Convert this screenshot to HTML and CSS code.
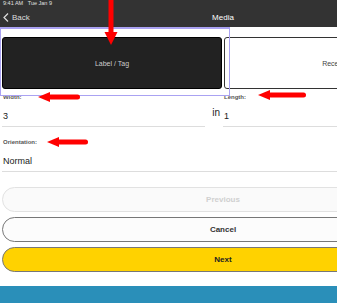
FILE: index.html
```html
<!DOCTYPE html>
<html lang="en">
<head>
  <meta charset="UTF-8" />
  <title>Media</title>
  <meta name="viewport" content="width=device-width, initial-scale=1.0" />
  <link rel="stylesheet" href="styles.css">
</head>
<body>
  <div class="screen">
    <header class="topbar">
      <div class="status">9:41 AM&nbsp;&nbsp;&nbsp;Tue Jan 9</div>
      <div class="nav">
        <span class="back">
          <svg width="6" height="9" viewBox="0 0 6 9"><path d="M5 0.5 L1 4.5 L5 8.5" fill="none" stroke="#ddd" stroke-width="1.2"/></svg>
          Back
        </span>
        <span class="title">Media</span>
      </div>
    </header>

    <section class="tabs">
      <div class="tab tab-active">Label / Tag</div>
      <div class="tab">Receipt</div>
    </section>

    <section class="fields">
      <div class="row">
        <div class="field field-width">
          <label>Width:</label>
          <div class="value">3</div>
        </div>
        <div class="unit">in</div>
        <div class="field field-length">
          <label>Length:</label>
          <div class="value">1</div>
        </div>
      </div>
      <div class="field field-full">
        <label>Orientation:</label>
        <div class="value">Normal</div>
      </div>
    </section>

    <section class="actions">
      <button class="btn btn-disabled">Previous</button>
      <button class="btn">Cancel</button>
      <button class="btn btn-primary">Next</button>
    </section>

    <footer class="bottom-bar"></footer>

    <!-- annotation overlays -->
    <div class="selection"></div>
    <svg class="arrow-down" width="16" height="46" viewBox="0 0 16 46">
      <rect x="5.5" y="0" width="5" height="35" fill="#f00"/>
      <polygon points="1.5,32 14.5,32 8,45" fill="#f00"/>
    </svg>
    <svg class="arrow arrow-width" width="42" height="10" viewBox="0 0 42 10">
      <polygon points="0,5 12,0 12,10" fill="#f00"/>
      <rect x="10" y="2.5" width="32" height="5" rx="2.5" fill="#f00"/>
    </svg>
    <svg class="arrow arrow-length" width="48" height="10" viewBox="0 0 48 10">
      <polygon points="0,5 12,0 12,10" fill="#f00"/>
      <rect x="10" y="2.5" width="38" height="5" rx="2.5" fill="#f00"/>
    </svg>
    <svg class="arrow arrow-orient" width="41" height="10" viewBox="0 0 41 10">
      <polygon points="0,5 12,0 12,10" fill="#f00"/>
      <rect x="10" y="2.5" width="31" height="5" rx="2.5" fill="#f00"/>
    </svg>
  </div>
</body>
</html>
```

FILE: styles.css
```css
:root {
  --bar: #333333;
  --text: #222222;
  --muted: #555555;
  --line: #dddddd;
  --yellow: #ffd200;
  --blue: #2a8fb9;
  --select: #aaa2f2;
}

html, body {
  margin: 0;
  overflow: hidden;
  background: #ffffff;
}

body {
  font-family: 'Liberation Sans', Arial, sans-serif;
  color: var(--text);
  width: 337px;
  height: 303px;
}

.screen {
  position: relative;
  width: 446px;
}

.topbar {
  background-color: var(--bar);
  height: 27px;
  color: #ffffff;
}

.status {
  font-size: 5.5px;
  line-height: 7px;
  padding: 0 3px;
  color: #e0e0e0;
}

.nav {
  position: relative;
  height: 20px;
  display: flex;
  align-items: center;
  font-size: 8px;
}

.back {
  display: flex;
  align-items: center;
  gap: 3px;
  padding-left: 3px;
  color: #dddddd;
}

.title {
  position: absolute;
  left: 0;
  right: 0;
  text-align: center;
  color: #ffffff;
}

.tabs {
  display: flex;
  gap: 2px;
  padding: 10px 2px 0;
}

.tab {
  flex: 1;
  height: 50px;
  border: 1px solid #333333;
  border-radius: 3px;
  display: flex;
  align-items: center;
  justify-content: center;
  font-size: 7px;
  color: #444444;
}

.tab-active {
  background-color: #222222;
  border-color: #000000;
  color: #cccccc;
}

.fields {
  padding: 4px 2px 0;
}

.row {
  display: flex;
}

.field label {
  display: block;
  font-size: 6px;
  font-weight: bold;
  line-height: 8px;
  color: var(--muted);
  padding-left: 1px;
}

.value {
  margin-top: 9px;
  font-size: 9px;
  line-height: 12px;
  padding: 0 1px 4px;
  border-bottom: 1px solid var(--line);
}

.field-width {
  width: 203px;
}

.unit {
  width: 18px;
  margin-top: 14px;
  font-size: 10px;
  line-height: 12px;
  text-align: right;
  padding-right: 3px;
  box-sizing: border-box;
}

.field-length {
  flex: 1;
}

.field-full {
  margin-top: 11px;
}

.actions {
  display: flex;
  flex-direction: column;
  gap: 5px;
  padding: 15px 2px 0;
}

.btn {
  height: 25px;
  border-radius: 13px;
  border: 1px solid #777777;
  background-color: #fcfcfc;
  font-family: inherit;
  font-size: 8px;
  font-weight: bold;
  color: #333333;
  padding: 0;
}

.btn-disabled {
  border-color: #e2e2e2;
  background-color: #fafafa;
  color: #d0d0d0;
}

.btn-primary {
  background-color: var(--yellow);
  color: #222222;
}

.bottom-bar {
  margin-top: 14px;
  height: 20px;
  background-color: var(--blue);
}

.selection {
  position: absolute;
  left: 0;
  top: 27px;
  width: 228px;
  height: 66px;
  border: 1px solid var(--select);
  border-top-width: 2px;
}

.arrow-down {
  position: absolute;
  left: 103px;
  top: 0;
}

.arrow {
  position: absolute;
}

.arrow-width {
  left: 38px;
  top: 92px;
}

.arrow-length {
  left: 258px;
  top: 90px;
}

.arrow-orient {
  left: 47px;
  top: 137px;
}
```
